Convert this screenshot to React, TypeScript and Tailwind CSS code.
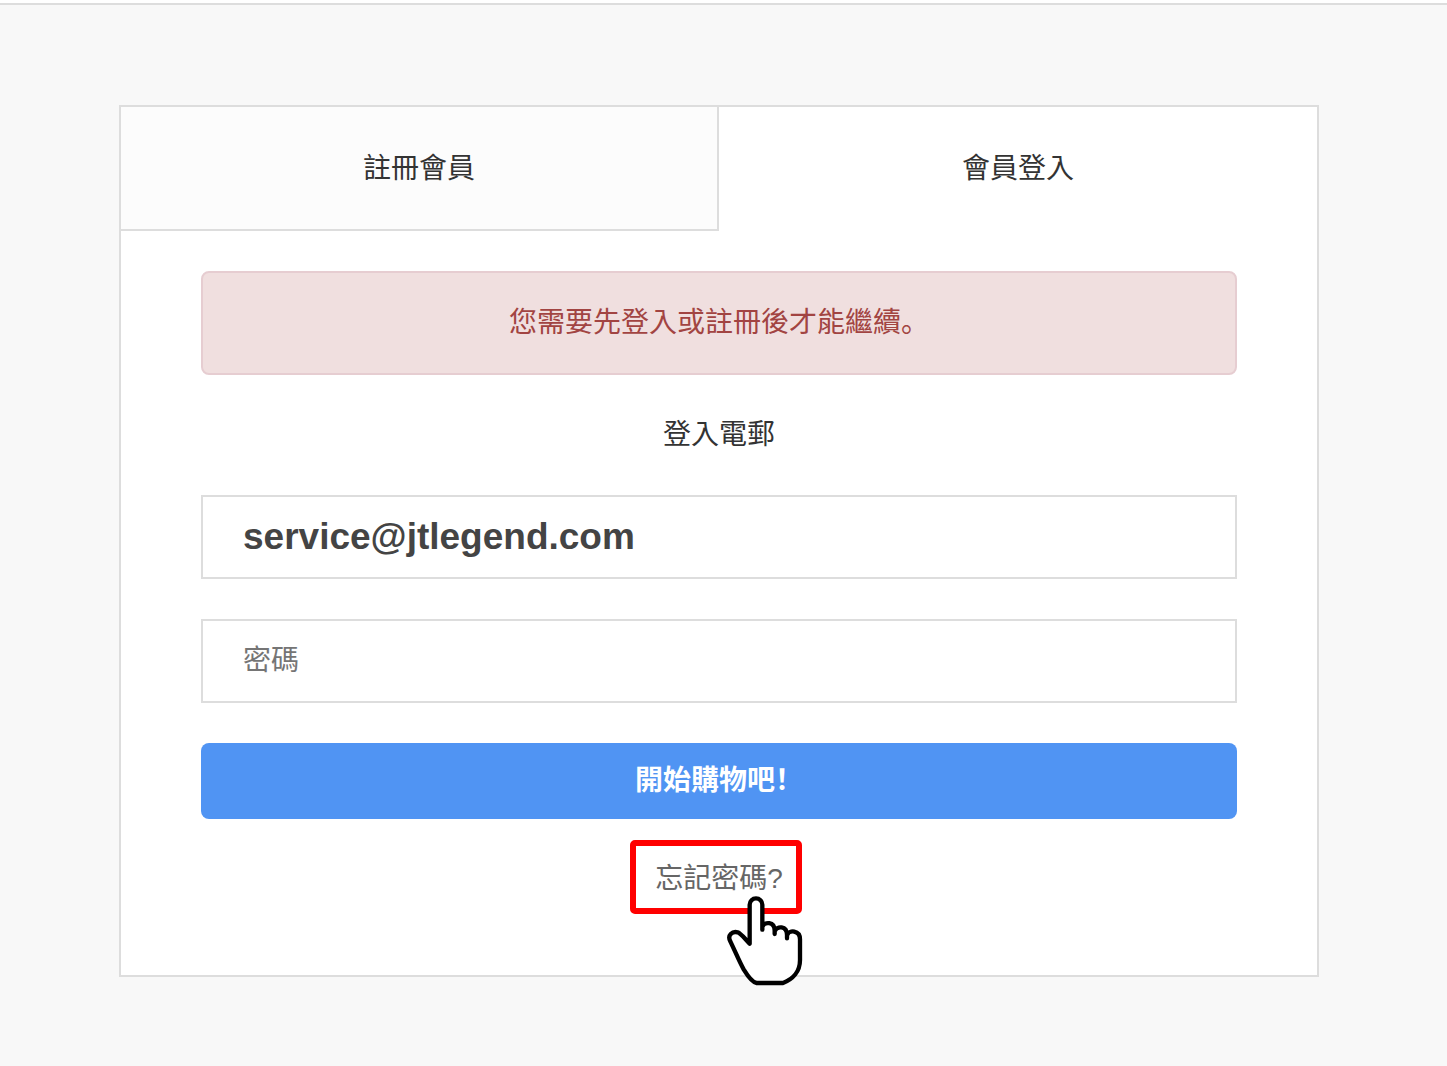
import React, { useState } from 'react';

const inputClass =
  'block w-full h-[84px] px-10 border-2 border-[#dddddd] bg-white placeholder:text-[#757575] outline-none';

function HandPointer({ className }: { className?: string }) {
  return (
    <svg
      viewBox="315 189 240 285"
      className={className}
      fill="#ffffff"
      stroke="#000000"
      strokeWidth="13"
      strokeLinecap="round"
      strokeLinejoin="round"
      aria-hidden="true"
    >
      <path d="M389 341V224a19 19 0 0 1 38 0V299V290C433 274 464 274 464 302V312V304C470 286 501 287 501 315V325V316C507 298 540 300 540 328V390C540 425 518 448 489 459H410C396 457 382 436 371 418C360 399 350 374 331 334C321 316 337 303 353 307C364 311 374 326 389 341Z" />
    </svg>
  );
}

// full-width mark that sits at the left of its cell
function Mark({ children }: { children: React.ReactNode }) {
  return (
    <span lang="zh-Hans" className="leading-none font-['Noto_Sans_CJK_SC',sans-serif]">
      {children}
    </span>
  );
}

export default function App() {
  const [email, setEmail] = useState('service@jtlegend.com');
  const [password, setPassword] = useState('');

  return (
    <div
      lang="zh-Hant"
      className="min-h-screen bg-[#f8f8f8] font-['Liberation_Sans','Noto_Sans_CJK_TC',sans-serif] text-[28px] leading-10 text-[#333333]"
    >
      <header className="h-[5px] bg-white border-b-2 border-[#dddddd]" />

      <main className="pt-[100px] pb-[89px] pr-[9px]">
        <section className="max-w-[1200px] mx-auto bg-white border-2 border-[#dddddd]">
          <div role="tablist" className="grid grid-cols-2">
            <button
              type="button"
              role="tab"
              aria-selected="false"
              className="h-[124px] pt-0.5 bg-[#fcfcfc] border-r-2 border-b-2 border-[#dddddd] cursor-pointer"
            >
              註冊會員
            </button>
            <button type="button" role="tab" aria-selected="true" className="h-[124px] cursor-pointer">
              會員登入
            </button>
          </div>

          <form
            className="flex flex-col px-20 pt-10 pb-[76px]"
            onSubmit={(e) => e.preventDefault()}
          >
            <div
              role="alert"
              className="py-[30px] rounded-lg border-2 border-[#e6cdd1] bg-[#f0dfdf] text-center text-[#a24442]"
            >
              您需要先登入或註冊後才能繼續<Mark>。</Mark>
            </div>

            <label htmlFor="email" className="my-10 text-center">
              登入電郵
            </label>
            <input
              id="email"
              type="email"
              value={email}
              onChange={(e) => setEmail(e.target.value)}
              className={`${inputClass} text-[37px] font-bold text-[#444444]`}
            />
            <input
              type="password"
              aria-label="密碼"
              placeholder="密碼"
              value={password}
              onChange={(e) => setPassword(e.target.value)}
              className={`${inputClass} mt-10`}
            />

            <button
              type="submit"
              className="mt-10 h-[76px] rounded-lg bg-[#5094f3] font-bold text-white cursor-pointer"
            >
              開始購物吧<Mark>！</Mark>
            </button>

            <div className="relative self-center mt-10">
              <a href="#forgot" className="block text-[#666666]">
                忘記密碼?
              </a>
              <span className="absolute -top-[19px] -bottom-[15px] -left-[25px] -right-[19px] rounded-[5px] border-[6px] border-[#ff0000] pointer-events-none" />
              <HandPointer className="absolute left-[70px] top-[34px] w-20 h-[95px] pointer-events-none" />
            </div>
          </form>
        </section>
      </main>
    </div>
  );
}
